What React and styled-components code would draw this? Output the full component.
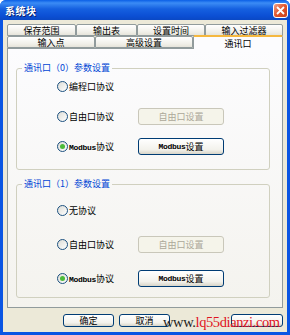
import React from "react";
import styled, { createGlobalStyle } from "styled-components";

const Global = createGlobalStyle`
  html, body {
    margin: 0;
    padding: 0;
    background: #ffffff;
  }
  body {
    font-family: "Noto Sans CJK SC", "Liberation Sans", sans-serif;
    font-size: 9px;
    color: #000;
  }
`;

const Window = styled.div`
  position: relative;
  width: 290px;
  height: 335px;
  box-sizing: border-box;
  display: flex;
  flex-direction: column;
  background: #0a55e3;
  border-radius: 6px 6px 0 0;
  overflow: hidden;
`;

const TitleBar = styled.div`
  height: 20px;
  flex: none;
  display: flex;
  align-items: center;
  justify-content: space-between;
  padding: 0 2px 0 5px;
  background: linear-gradient(#0a5fe6 0%, #3b8cf5 15%, #1560e0 45%, #0b4fd4 80%, #0a48c4 100%);
`;

const Title = styled.div`
  color: #fff;
  font-weight: bold;
  font-size: 10px;
  text-shadow: 1px 1px 0 #0a1f6b;
  letter-spacing: 0.5px;
`;

const Close = styled.div`
  width: 15px;
  height: 15px;
  box-sizing: border-box;
  border: 1px solid #fff;
  border-radius: 3px;
  background: linear-gradient(135deg, #f0a28a 0%, #e2552c 50%, #c8401c 100%);
  display: flex;
  align-items: center;
  justify-content: center;
`;

const Body = styled.div`
  flex: 1;
  margin: 0 3px 3px 3px;
  background: #ece9d8;
  display: flex;
  flex-direction: column;
  padding: 5px 4px 0 4px;
`;

const TabRow = styled.div`
  display: flex;
  height: ${({ $h }) => $h}px;
  align-items: flex-end;
`;

const Tab = styled.div`
  width: ${({ $w }) => $w}px;
  box-sizing: border-box;
  height: ${({ $active }) => ($active ? "14px" : "12px")};
  margin-bottom: ${({ $active }) => ($active ? "-1px" : "0")};
  position: relative;
  z-index: ${({ $active }) => ($active ? 2 : 1)};
  border: 1px solid #919b9c;
  border-bottom: ${({ $active }) => ($active ? "none" : "1px solid #919b9c")};
  border-top: ${({ $active }) => ($active ? "2px solid #f5b83f" : "1px solid #919b9c")};
  border-radius: 2px 2px 0 0;
  background: ${({ $active }) =>
    $active ? "#fcfcfe" : "linear-gradient(#ffffff, #f0efe8 70%, #e6e4da)"};
  display: flex;
  align-items: center;
  justify-content: center;
  font-size: 9px;
  line-height: 1;
`;

const Panel = styled.div`
  height: 260px;
  box-sizing: border-box;
  border: 1px solid #919b9c;
  background: linear-gradient(#fcfcfe, #f4f3ee);
  padding: 13px 12px 0 8px;
  display: flex;
  flex-direction: column;
  gap: 8px;
`;

const Group = styled.fieldset`
  margin: 0;
  border: 1px solid #d0d0bf;
  border-radius: 3px;
  padding: ${({ $pt }) => $pt}px 8px ${({ $pb }) => $pb}px 40px;
  display: flex;
  flex-direction: column;
  gap: ${({ $gap }) => $gap}px;
`;

const Legend = styled.legend`
  color: #0046d5;
  padding: 0 2px;
  margin-left: -35px;
  font-size: 9px;
  line-height: 12px;
`;

const Row = styled.div`
  display: grid;
  grid-template-columns: 81px 86px;
  align-items: center;
  height: 20px;
`;

const RadioLabel = styled.label`
  display: flex;
  align-items: center;
  gap: 1px;
  font-size: 9px;
  white-space: nowrap;
`;

const RadioCircle = styled.span`
  width: 11px;
  height: 11px;
  box-sizing: border-box;
  border: 1px solid #1c5180;
  border-radius: 50%;
  background: linear-gradient(135deg, #dcdcd6, #ffffff);
  display: flex;
  align-items: center;
  justify-content: center;
  &::after {
    content: "";
    display: ${({ $on }) => ($on ? "block" : "none")};
    width: 5px;
    height: 5px;
    border-radius: 50%;
    background: #4dbb3a;
  }
`;

const Latin = styled.span`
  font-family: "Liberation Mono", monospace;
  font-weight: bold;
  font-size: 8px;
  letter-spacing: -0.3px;
`;

const Button = styled.div`
  height: ${({ $h }) => $h || 17}px;
  width: ${({ $w }) => $w || 86}px;
  margin-left: ${({ $ml }) => $ml || 0}px;
  box-sizing: border-box;
  border: 1px solid ${({ $disabled }) => ($disabled ? "#c9c7ba" : "#003c74")};
  border-radius: 3px;
  background: ${({ $disabled }) =>
    $disabled ? "#f5f4ea" : "linear-gradient(#ffffff, #f3f2ec 70%, #d8d5c8)"};
  color: ${({ $disabled }) => ($disabled ? "#aca899" : "#000")};
  display: flex;
  align-items: center;
  justify-content: center;
  font-size: 9px;
`;

const Footer = styled.div`
  flex: 1;
  display: flex;
  align-items: center;
  gap: 5px;
  padding-left: 56px;
`;

const Watermark = styled.div`
  position: absolute;
  left: 163px;
  top: 314px;
  font-family: "Liberation Serif", serif;
  font-size: 14.5px;
  color: #e0141e;
  white-space: nowrap;
  letter-spacing: -0.4px;
  span {
    color: #222;
  }
`;

function Radio({ on, children }) {
  return (
    <RadioLabel>
      <RadioCircle $on={on} />
      <span>{children}</span>
    </RadioLabel>
  );
}

export default function App() {
  return (
    <>
      <Global />
      <Window>
        <TitleBar>
          <Title>系统块</Title>
          <Close>
            <svg width="9" height="9" viewBox="0 0 9 9">
              <path d="M1 1 L8 8 M8 1 L1 8" stroke="#fff" strokeWidth="1.8" />
            </svg>
          </Close>
        </TitleBar>
        <Body>
          <TabRow $h={11}>
            <Tab $w={69}>保存范围</Tab>
            <Tab $w={61}>输出表</Tab>
            <Tab $w={68}>设置时间</Tab>
            <Tab $w={78}>输入过滤器</Tab>
          </TabRow>
          <TabRow $h={12}>
            <Tab $w={88}>输入点</Tab>
            <Tab $w={98}>高级设置</Tab>
            <Tab $w={90} $active>通讯口</Tab>
          </TabRow>
          <Panel>
            <Group $pt={2} $pb={13} $gap={10}>
              <Legend>通讯口（0）参数设置</Legend>
              <Row>
                <Radio>编程口协议</Radio>
              </Row>
              <Row>
                <Radio>自由口协议</Radio>
                <Button $disabled>自由口设置</Button>
              </Row>
              <Row>
                <Radio on>
                  <Latin>Modbus</Latin>协议
                </Radio>
                <Button>
                  <Latin>Modbus</Latin>设置
                </Button>
              </Row>
            </Group>
            <Group $pt={10} $pb={9} $gap={14}>
              <Legend>通讯口（1）参数设置</Legend>
              <Row>
                <Radio>无协议</Radio>
              </Row>
              <Row>
                <Radio>自由口协议</Radio>
                <Button $disabled>自由口设置</Button>
              </Row>
              <Row>
                <Radio on>
                  <Latin>Modbus</Latin>协议
                </Radio>
                <Button>
                  <Latin>Modbus</Latin>设置
                </Button>
              </Row>
            </Group>
          </Panel>
          <Footer>
            <Button $w={52} $h={13}>确定</Button>
            <Button $w={52} $h={13}>取消</Button>
            <Button $w={53} $h={13} $ml={56} />
          </Footer>
        </Body>
        <Watermark>
          <span>www.</span>lq55dianzi.com
        </Watermark>
      </Window>
    </>
  );
}
